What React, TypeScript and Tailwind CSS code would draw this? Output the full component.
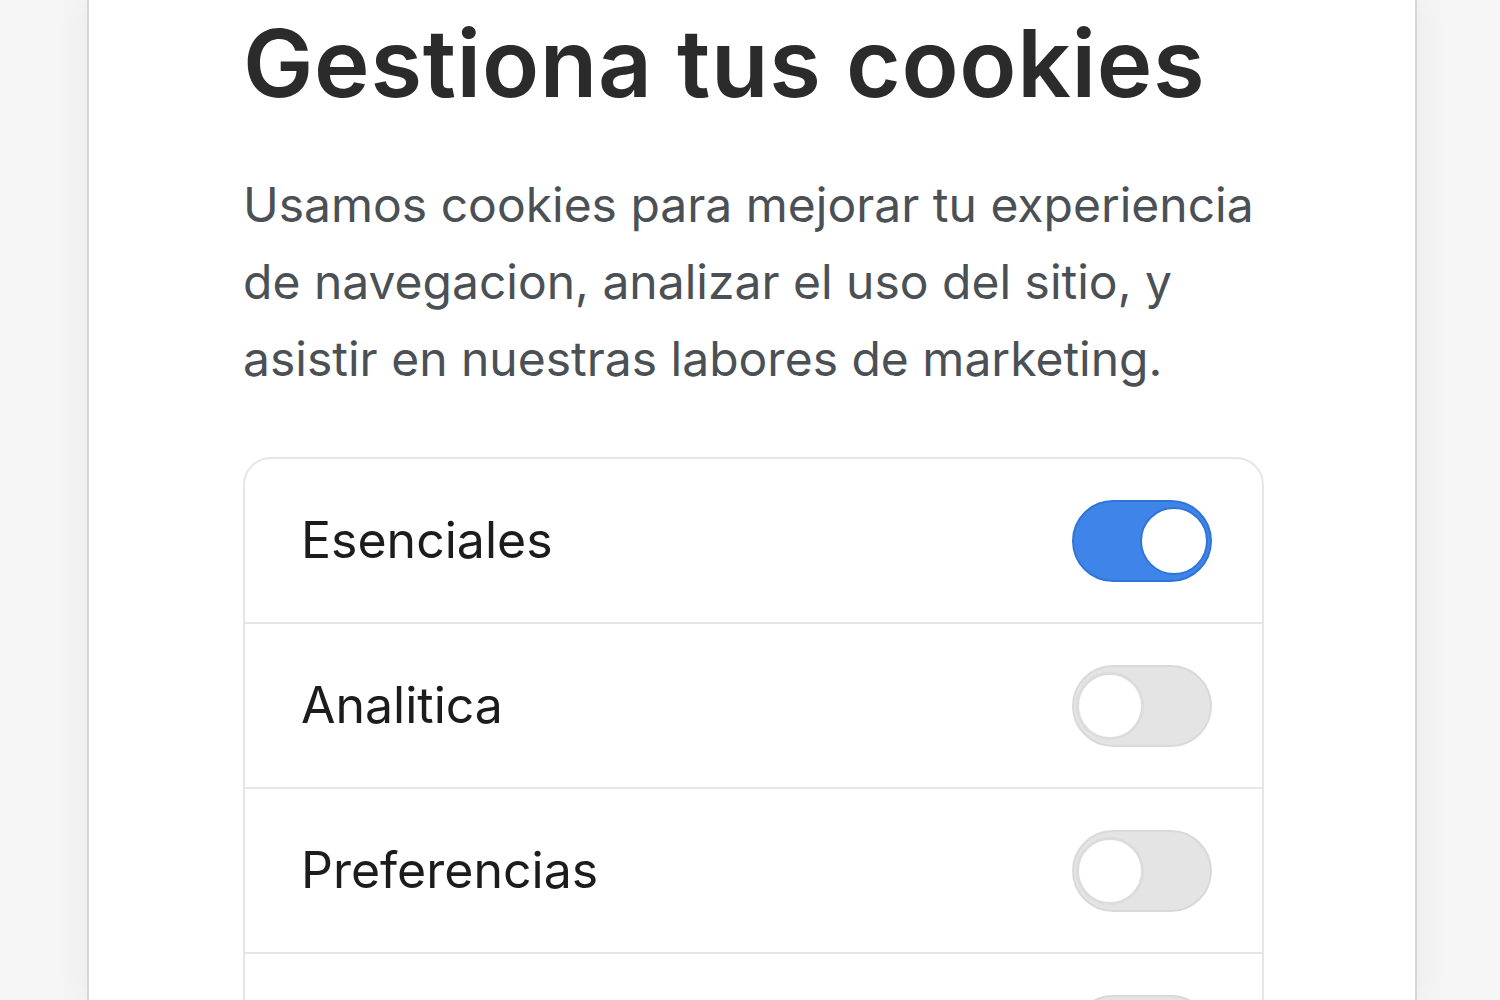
import { useState } from "react";

type Category = {
  id: string;
  label: string;
  enabled: boolean;
};

const initialCategories: Category[] = [
  { id: "essential", label: "Esenciales", enabled: true },
  { id: "analytics", label: "Analitica", enabled: false },
  { id: "preferences", label: "Preferencias", enabled: false },
  { id: "marketing", label: "Marketing", enabled: false },
];

const Toggle = ({
  checked,
  onChange,
}: {
  checked: boolean;
  onChange: () => void;
}) => (
  <button
    role="switch"
    aria-checked={checked}
    onClick={onChange}
    className={`flex h-[82px] w-[140px] shrink-0 items-center rounded-full border-2 p-[2px] transition-colors ${
      checked
        ? "justify-end border-[#2f74d8] bg-[#3f84e8]"
        : "justify-start border-[#d9d9d9] bg-[#e4e4e4]"
    }`}
  >
    <span
      className={`block h-[68px] w-[68px] rounded-full bg-white ${
        checked ? "border-2 border-[#2f74d8]" : "border-[3px] border-[#dcdcdc]"
      }`}
    />
  </button>
);

export default function App() {
  const [categories, setCategories] = useState(initialCategories);

  const toggle = (id: string) =>
    setCategories((prev) =>
      prev.map((c) => (c.id === id ? { ...c, enabled: !c.enabled } : c))
    );

  return (
    <div className="h-screen overflow-hidden bg-[#f6f6f6] pl-[87px] font-['Inter','Noto_Sans',sans-serif]">
      <div className="h-full w-[1330px] border-x-2 border-[#d6d6d6] bg-white pl-[154px] pr-[151px] pt-[8px] shadow-[0_0_40px_rgba(0,0,0,0.07)]">
        <h1 className="text-[94px] font-semibold leading-[110px] tracking-[0.7px] text-[#2b2b2b]">
          Gestiona tus cookies
        </h1>
        <p className="mt-[48px] text-[48px] leading-[77px] text-[#4b5055]">
          Usamos cookies para mejorar tu experiencia de navegacion, analizar el
          uso del sitio, y asistir en nuestras labores de marketing.
        </p>
        <div className="mt-[60px] rounded-[28px] border-2 border-[#e6e6e6]">
          {categories.map((c) => (
            <div
              key={c.id}
              className="flex h-[165px] items-center justify-between border-b-2 border-[#e6e6e6] pl-[56px] pr-[50px]"
            >
              <span className="text-[50px] text-[#1c1c1c]">{c.label}</span>
              <Toggle checked={c.enabled} onChange={() => toggle(c.id)} />
            </div>
          ))}
        </div>
      </div>
    </div>
  );
}
